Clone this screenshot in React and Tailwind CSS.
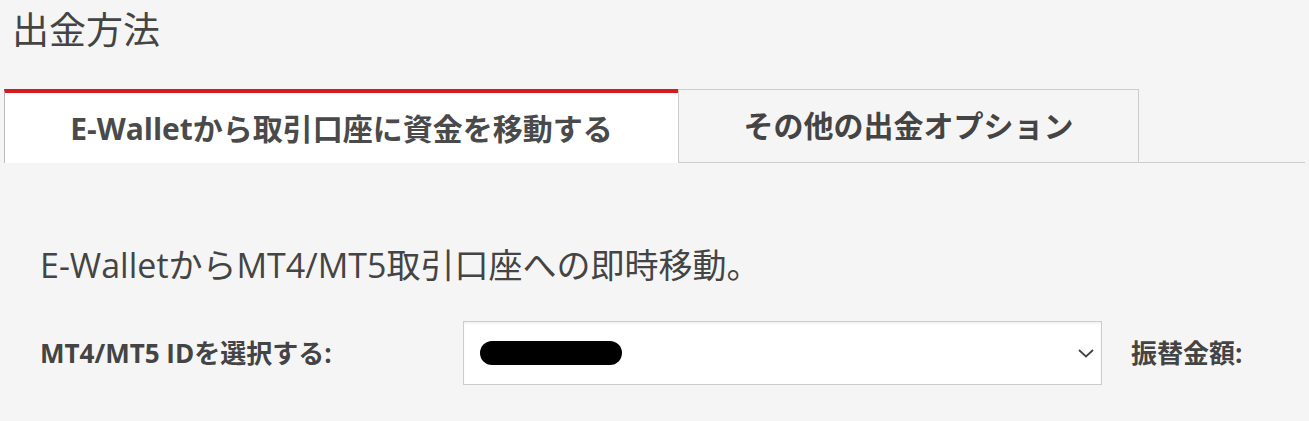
import React from "react";

export default function App() {
  return (
    <div
      className="w-full h-[421px] overflow-hidden bg-[#f5f5f5] text-[#444444] px-1"
      style={{ fontFamily: '"Open Sans", "Noto Sans CJK JP", sans-serif' }}
    >
      <h1 className="pl-2 pt-[5px] text-[37px] leading-[50px] font-normal text-[#444444]">
        出金方法
      </h1>
      <div className="mt-[34px] flex border-b border-[#cccccc]">
        <div className="-mb-px w-[674px] h-[74px] bg-white border-t-4 border-t-[#d71920] border-l border-l-[#bbbbbb] flex items-center justify-center">
          <span className="text-[30px] font-bold leading-none text-[#4a4a4a] pt-[2px]">
            E-Walletから取引口座に資金を移動する
          </span>
        </div>
        <div className="w-[461px] h-[73px] border border-b-0 border-[#cccccc] bg-[#f5f5f5] flex items-center justify-center">
          <span className="text-[30px] font-bold leading-none text-[#444444]">
            その他の出金オプション
          </span>
        </div>
      </div>
      <div className="pl-[36px] pt-[79px]">
        <p className="text-[34px] leading-[46px] text-[#444444]">
          E-WalletからMT4/MT5取引口座への即時移動。
        </p>
        <div className="mt-[33px] flex items-center">
          <div className="w-[423px] text-[26px] font-bold text-[#444444]">
            MT4/MT5 IDを選択する:
          </div>
          <div className="w-[639px] h-[64px] bg-white border border-[#cccccc] shadow-[inset_0_2px_2px_rgba(0,0,0,0.05)] flex items-center justify-between pl-[16px] pr-[6px]">
            <div className="w-[142px] h-[24px] rounded-full bg-black" />
            <svg width="18" height="12" viewBox="0 0 18 12" fill="none">
              <path d="M2 3 L9 9.5 L16 3" stroke="#444444" strokeWidth="1.8" />
            </svg>
          </div>
          <div className="ml-[29px] text-[26px] font-bold text-[#444444]">
            振替金額:
          </div>
        </div>
      </div>
    </div>
  );
}
